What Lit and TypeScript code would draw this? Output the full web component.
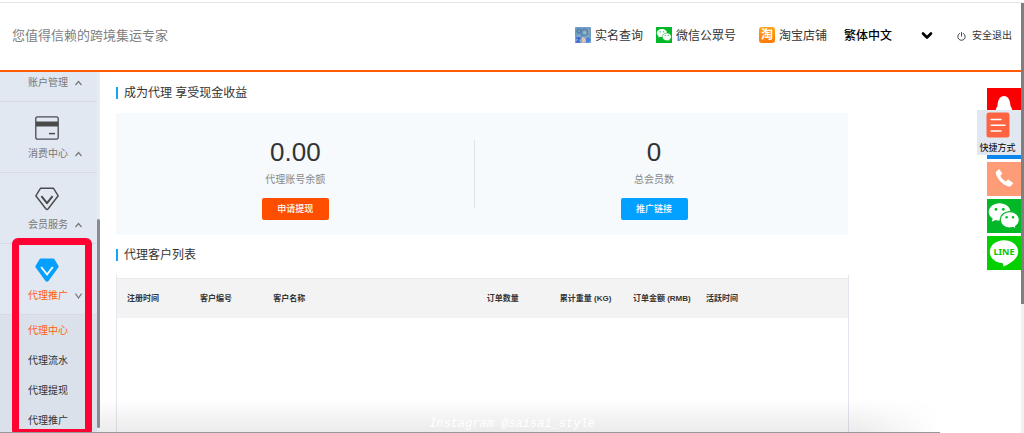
import { LitElement, html, css, svg, nothing } from "lit";
import { customElement, state } from "lit/decorators.js";
import { classMap } from "lit/directives/class-map.js";

const cardIcon = svg`
  <svg class="nav-icon" viewBox="0 0 24 24" fill="none" stroke="#4a4a4a" stroke-width="1.3" aria-hidden="true">
    <rect x="0.8" y="0.8" width="22.4" height="22.4" rx="1.8"/>
    <path d="M1 8h22" stroke-width="5"/>
    <path d="M14 17.6h6" stroke-width="1.5"/>
  </svg>`;

const gemIcon = svg`
  <svg class="nav-icon" viewBox="0 0 24 24" fill="none" stroke="#4a4a4a" stroke-width="1.4" stroke-linejoin="round" aria-hidden="true">
    <path d="M5.6 1.2h12.8l4.8 7.6L13.2 21.8q-1.2 1.4-2.4 0L.8 8.8z"/>
    <path d="M6.4 9.2l5.6 7 5.6-7" stroke-width="2"/>
  </svg>`;

const gemSolidIcon = svg`
  <svg class="nav-icon" viewBox="0 0 24 24" aria-hidden="true">
    <path d="M6 .4h12q1 0 1.500.8l3.900 6.600q.5.9-.1 1.700L13.500 23q-1.500 1.600-3 0L.7 9.500Q.1 8.700.6 7.800L4.500 1.200Q5 .4 6 .4z" fill="#05a0fd"/>
    <path d="M6.200 9l5.800 7.600L17.800 9" fill="none" stroke="#fff" stroke-width="1.800"/>
  </svg>`;

const wechatGlyph = svg`
  <path d="M12.600 4.200C6.600 4.200 1.800 8 1.800 12.900c0 2.700 1.500 5 3.900 6.600l-1 3.300 3.900-1.900c1.300.4 2.600.6 4 .6 6 0 10.800-3.800 10.800-8.600S18.600 4.200 12.600 4.200z" fill="#fff"/>
  <path d="M22.800 12.600c-5.400 0-9.600 3.600-9.600 8.200s4.200 8.200 9.600 8.200c1.100 0 2.200-.2 3.200-.5l3.300 1.700-.8-2.800c2.400-1.600 3.900-3.900 3.900-6.600 0-4.600-4.200-8.200-9.600-8.200z" fill="#fff" stroke="#03b826" stroke-width="1.200"/>
  <g fill="#03b826">
    <circle cx="9" cy="10.300" r="1.400"/><circle cx="16.300" cy="10.300" r="1.400"/>
    <circle cx="19.600" cy="18.200" r="1.200"/><circle cx="26" cy="18.200" r="1.200"/>
  </g>`;

interface NavGroup {
  label: string;
  icon?: unknown;
  open?: boolean;
  children?: string[];
}

const NAV: NavGroup[] = [
  { label: "账户管理" },
  { label: "消费中心", icon: cardIcon },
  { label: "会员服务", icon: gemIcon },
  {
    label: "代理推广",
    icon: gemSolidIcon,
    open: true,
    children: ["代理中心", "代理流水", "代理提现", "代理推广"],
  },
];

const fonts = css`
  :host {
    font-family: "Liberation Sans", "Noto Sans CJK SC", sans-serif;
    color: #333;
  }
  a {
    color: inherit;
    text-decoration: none;
  }
  button,
  select {
    font-family: inherit;
  }
`;

@customElement("top-bar")
class TopBar extends LitElement {
  static styles = [
    fonts,
    css`
      :host {
        display: flex;
        align-items: center;
        justify-content: space-between;
        height: 66px;
        padding: 0 9px 1px 12px;
        border-top: 1px solid #e4e4e4;
        border-bottom: 2px solid #ff5a05;
        background: #fff;
      }
      .slogan {
        margin: 0;
        font-size: 13px;
        line-height: 20px;
        color: #808080;
      }
      .links {
        display: flex;
        align-items: center;
        font-size: 12px;
        line-height: 18px;
      }
      .link {
        display: flex;
        align-items: flex-start;
        gap: 4px;
        margin-right: 13px;
      }
      .link.wide {
        margin-right: 23px;
      }
      .link.shop {
        margin-right: 17px;
      }
      .link svg {
        width: 16px;
        height: 16px;
      }
      .taobao {
        width: 16px;
        height: 16px;
        border-radius: 3px;
        background: linear-gradient(#ffa31a, #ff7a00);
        color: #fff;
        font-size: 12px;
        font-weight: 700;
        line-height: 16px;
        text-align: center;
      }
      .language {
        position: relative;
        width: 90px;
        margin-right: 23px;
      }
      .language select {
        display: block;
        width: 100%;
        height: 18px;
        padding: 0;
        border: 0;
        appearance: none;
        background: transparent;
        color: #000;
        font-size: 12px;
        font-weight: 500;
      }
      .language svg {
        position: absolute;
        right: 1px;
        top: 4px;
        width: 12px;
        height: 9px;
        pointer-events: none;
      }
      .logout {
        display: flex;
        align-items: center;
        gap: 6px;
        padding: 0;
        border: 0;
        background: none;
        color: #333;
        font-size: 10px;
        line-height: 16px;
      }
      .logout svg {
        width: 9px;
        height: 9px;
      }
    `,
  ];

  render() {
    return html`
      <p class="slogan">您值得信赖的跨境集运专家</p>
      <nav class="links">
        <a class="link" href="#verify">
          <svg viewBox="0 0 16 16" aria-hidden="true">
            <rect width="16" height="16" rx="1" fill="#6d9cc4" />
            <path d="M0 10l4-3 3 4 4-5 5 4v6H0z" fill="#80a8c9" />
            <circle cx="4" cy="4" r="2" fill="none" stroke="#52718f" />
            <circle cx="9.500" cy="5.500" r="3.400" fill="none" stroke="#4f7da9" />
            <circle cx="9.500" cy="5.500" r="1.200" fill="#a7bcc0" />
            <path d="M1 11h4l-3 4h3" fill="none" stroke="#3f5fdc" stroke-width="1.400" />
            <path d="M7 10l3 1 1 4-4 1z" fill="#d9c6ae" />
            <path d="M11 11l3-1 2 3-3 3-2-1z" fill="#4b80db" />
            <path d="M13 2l2 1v4l-2-1z" fill="#9a9c8c" />
          </svg>
          实名查询
        </a>
        <a class="link wide" href="#wechat">
          <svg viewBox="0 0 34 34" aria-hidden="true">
            <rect width="34" height="34" fill="#03b826" />
            ${wechatGlyph}
          </svg>
          微信公眾号
        </a>
        <a class="link shop" href="#shop">
          <span class="taobao" aria-hidden="true">淘</span>
          淘宝店铺
        </a>
        <div class="language">
          <select aria-label="语言">
            <option>繁体中文</option>
          </select>
          <svg viewBox="0 0 12 9" fill="none" stroke="#000" stroke-width="2.600" stroke-linecap="round" stroke-linejoin="round" aria-hidden="true">
            <path d="M2 2.500l4 4 4-4" />
          </svg>
        </div>
        <button class="logout" type="button">
          <svg viewBox="0 0 9 9" fill="none" stroke="#444" stroke-width="1" stroke-linecap="round" aria-hidden="true">
            <path d="M2.600 1.400a3.700 3.700 0 1 0 3.800 0M4.500.5v3.600" />
          </svg>
          安全退出
        </button>
      </nav>
    `;
  }
}

@customElement("side-nav")
class SideNav extends LitElement {
  @state() private current = "代理中心";

  static styles = [
    fonts,
    css`
      :host {
        display: block;
        position: relative;
        overflow: hidden;
        background: #e2e8f2;
        border-right: 3px solid #e8ebf1;
      }
      .group {
        display: flex;
        flex-direction: column;
        gap: 6px;
        padding: 14px 0 10px 28px;
        border-bottom: 1px solid #d5dae3;
      }
      .group.cut {
        padding-top: 3px;
      }
      .nav-icon {
        width: 24px;
        height: 24px;
        margin-left: 7px;
      }
      .toggle {
        display: flex;
        align-items: center;
        gap: 7px;
        padding: 0;
        border: 0;
        background: none;
        color: #777;
        font-size: 10px;
        line-height: 16px;
      }
      .toggle svg {
        width: 7px;
        height: 6px;
      }
      .open .toggle {
        color: #ff5f14;
      }
      .children {
        margin: 0;
        padding: 1px 0 0;
        list-style: none;
        background: #dbe1eb;
      }
      .children a {
        display: block;
        padding-left: 28px;
        font-size: 10px;
        line-height: 30px;
      }
      .children a.current {
        color: #ff5f14;
      }
      .marker {
        position: absolute;
        top: 166px;
        left: 12px;
        right: 5px;
        bottom: -3px;
        border: 7px solid #fd0232;
        border-radius: 6px;
        pointer-events: none;
      }
    `,
  ];

  private renderGroup(group: NavGroup) {
    return html`
      <div class=${classMap({ group: true, cut: !group.icon, open: !!group.open })}>
        ${group.icon ?? nothing}
        <button class="toggle" type="button" aria-expanded=${group.open ? "true" : "false"}>
          ${group.label}
          <svg viewBox="0 0 7 6" fill="none" stroke="#777" stroke-width="1.200" aria-hidden="true">
            <path d=${group.open ? "M.5.700l3 4.300 3-4.300" : "M.5 5l3-3.500 3 3.500"} />
          </svg>
        </button>
      </div>
      ${group.children
        ? html`<ul class="children">
            ${group.children.map(
              (name) => html`<li>
                <a
                  href="#agent"
                  class=${classMap({ current: name === this.current })}
                  @click=${() => (this.current = name)}
                  >${name}</a
                >
              </li>`
            )}
          </ul>`
        : nothing}
    `;
  }

  render() {
    return html`${NAV.map((g) => this.renderGroup(g))}
      <div class="marker"></div>`;
  }
}

@customElement("agent-page")
class AgentPage extends LitElement {
  static styles = [
    fonts,
    css`
      :host {
        display: flex;
        flex-direction: column;
        overflow: hidden;
        padding: 12px 172px 0 16px;
        background: #fff;
      }
      h2 {
        display: flex;
        align-items: center;
        gap: 6px;
        margin: 0;
        font-size: 12px;
        font-weight: 400;
        line-height: 18px;
      }
      h2::before {
        content: "";
        width: 2px;
        height: 12px;
        background: #12a5fa;
      }
      .summary {
        display: grid;
        grid-template-columns: 49% 49%;
        margin: 11px 1px 11px 0;
        padding: 23px 0 15px;
        background: #f6fafd;
      }
      .stat {
        display: flex;
        flex-direction: column;
        align-items: center;
      }
      .stat:first-child {
        background: linear-gradient(#dfe3e8, #dfe3e8) right 4px / 1px 68px no-repeat;
      }
      .value {
        font-size: 26px;
        line-height: 32px;
      }
      .label {
        margin: 4px 0 10px;
        color: #888;
        font-size: 10px;
        line-height: 16px;
      }
      .action {
        width: 67px;
        height: 22px;
        padding: 0;
        border: 0;
        border-radius: 2px;
        background: #ff4e00;
        color: #fff;
        font-size: 9px;
        font-weight: 500;
        line-height: 22px;
      }
      .action.blue {
        background: #03a1ff;
      }
      .list {
        flex: 1;
        margin-top: 11px;
        padding-top: 3px;
        border: solid #e3e6ee;
        border-width: 0 1px;
      }
      table {
        width: 100%;
        border-collapse: collapse;
        table-layout: fixed;
      }
      th {
        box-sizing: border-box;
        height: 39px;
        width: 10%;
        padding: 0 0 2px 10px;
        border-top: 1px solid #e9e9ec;
        background: #f3f3f3;
        font-size: 8px;
        font-weight: 700;
        text-align: left;
        white-space: nowrap;
      }
      th.name {
        width: auto;
      }
      th.active {
        width: 152px;
      }
    `,
  ];

  render() {
    return html`
      <h2>成为代理 享受现金收益</h2>
      <section class="summary">
        <div class="stat">
          <span class="value">0.00</span>
          <span class="label">代理账号余额</span>
          <button class="action" type="button">申请提现</button>
        </div>
        <div class="stat">
          <span class="value">0</span>
          <span class="label">总会员数</span>
          <button class="action blue" type="button">推广链接</button>
        </div>
      </section>
      <h2>代理客户列表</h2>
      <div class="list">
        <table>
          <thead>
            <tr>
              <th>注册时间</th>
              <th>客户编号</th>
              <th class="name">客户名称</th>
              <th>订单数量</th>
              <th>累计重量 (KG)</th>
              <th>订单金额 (RMB)</th>
              <th class="active">活跃时间</th>
            </tr>
          </thead>
          <tbody></tbody>
        </table>
      </div>
    `;
  }
}

@customElement("contact-dock")
class ContactDock extends LitElement {
  static styles = [
    fonts,
    css`
      :host {
        display: block;
      }
      .stack {
        display: flex;
        flex-direction: column;
        align-items: flex-end;
        gap: 3px;
      }
      .tile {
        display: block;
        width: 34px;
        height: 34px;
      }
      .tile svg {
        display: block;
        width: 34px;
        height: 34px;
      }
      .qq {
        background: #fb0000;
      }
      .blue {
        background: #0a86ee;
      }
      .phone {
        background: #ff9c78;
      }
      .wechat {
        background: #03b826;
      }
      .line {
        background: #04d000;
      }
      .line text {
        font: 700 9px "Noto Sans", sans-serif;
      }
      .shortcut {
        position: absolute;
        top: 22px;
        right: 0;
        display: flex;
        flex-direction: column;
        align-items: center;
        gap: 3px;
        width: 44px;
        padding: 2px 3px 0 0;
        border: 0;
        background: #e2e8f2;
        color: #000;
        font-size: 9px;
        line-height: 14px;
        white-space: nowrap;
      }
      .shortcut svg {
        width: 24px;
        height: 26px;
      }
    `,
  ];

  render() {
    return html`
      <div class="stack">
        <a class="tile qq" href="#qq" aria-label="QQ">
          <svg viewBox="0 0 34 34"><path d="M8.500 26c0-4 .5-6 2-8 .2-6 2.500-10 6.500-10s6.300 4 6.500 10c1.500 2 2 4 2 8z" fill="#fff" /></svg>
        </a>
        <a class="tile blue" href="#chat" aria-label="Chat"></a>
        <a class="tile phone" href="#phone" aria-label="Phone">
          <svg viewBox="0 0 34 34">
            <path d="M11.400 7.700l-2 1.500c-.7.700-.7 2-.2 3.500 2 5.500 6 9.400 11.500 11.600 1.400.5 2.600.3 3.300-.4l1.800-2.100c.4-.5.3-1-.2-1.400l-3.800-2.600c-.5-.3-1-.3-1.400.2l-1.500 1.500c-2.600-1.300-4.400-3.200-5.600-5.700l1.500-1.500c.4-.4.4-.9.1-1.400l-2.200-3.200c-.3-.5-.9-.5-1.300 0z" fill="#fff" />
          </svg>
        </a>
        <a class="tile wechat" href="#wechat" aria-label="WeChat">
          <svg viewBox="0 0 34 34">${wechatGlyph}</svg>
        </a>
        <a class="tile line" href="#line" aria-label="LINE">
          <svg viewBox="0 0 34 34">
            <path d="M17 4.200c-8 0-14.200 5-14.200 11.600 0 6 5 10.500 12 11.300 1.400.2 1.600.8 1.400 3.500C22 28.400 31.200 23 31.200 15.800 31.200 9.200 25 4.200 17 4.200z" fill="#fff" />
            <text x="17" y="19" text-anchor="middle" fill="#04c800">LINE</text>
          </svg>
        </a>
      </div>
      <button class="shortcut" type="button">
        <svg viewBox="0 0 24 26" aria-hidden="true">
          <rect x="0.500" y="0.500" width="23" height="25" rx="2.500" fill="#ff6442" />
          <path d="M5 7.500h10M5 13.300h14M5 19h10" stroke="#fff" stroke-width="1.500" stroke-linecap="round" />
        </svg>
        快捷方式
      </button>
    `;
  }
}

@customElement("app-root")
class AppRoot extends LitElement {
  static styles = css`
    :host {
      position: relative;
      display: grid;
      grid-template-columns: 100px 1fr 3px;
      grid-template-rows: auto 1fr;
      box-sizing: border-box;
      height: 100vh;
      padding-top: 2px;
      overflow: hidden;
      background: #fff;
    }
    top-bar {
      grid-column: 1 / 3;
    }
    side-nav {
      grid-area: 2 / 1;
      min-height: 0;
    }
    agent-page {
      grid-area: 2 / 2;
      min-height: 0;
    }
    .page-scroll {
      grid-area: 1 / 3 / 3 / 4;
      padding-top: 1px;
      background: #f1f1f1;
    }
    .page-thumb {
      height: 70%;
      background: #7f7f7f;
    }
    .nav-thumb {
      grid-area: 2 / 1;
      z-index: 1;
      justify-self: end;
      width: 3px;
      margin: 147px 0 5px;
      border-radius: 2px;
      background: #8b8b8b;
    }
    contact-dock {
      position: absolute;
      top: 88px;
      right: 3px;
    }
    .shade {
      position: absolute;
      left: 0;
      right: 84px;
      bottom: 0;
      height: 34px;
      box-sizing: border-box;
      border-bottom: 1px solid #999;
      pointer-events: none;
    }
    .shade::before {
      content: "";
      position: absolute;
      inset: 0 0 0 100px;
      background: linear-gradient(transparent, rgba(0, 0, 0, 0.08));
      mask-image: linear-gradient(to right, #000 90%, transparent);
    }
    .signature {
      position: absolute;
      bottom: 1px;
      left: 0;
      right: 0;
      color: #fff;
      text-align: center;
      font: italic 12px/16px "Liberation Mono", monospace;
    }
  `;

  render() {
    return html`
      <top-bar></top-bar>
      <side-nav></side-nav>
      <div class="nav-thumb"></div>
      <agent-page></agent-page>
      <div class="page-scroll"><div class="page-thumb"></div></div>
      <contact-dock></contact-dock>
      <div class="shade"></div>
      <div class="signature">Instagram @saisai_style</div>
    `;
  }
}
